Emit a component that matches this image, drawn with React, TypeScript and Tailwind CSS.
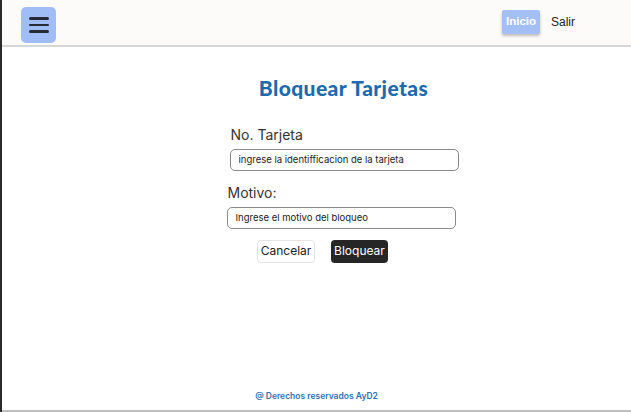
export default function App() {
  return (
    <div
      className="flex h-[412px] w-[631px] flex-col overflow-hidden border-l-2 border-[#2b2b2b] bg-white text-[#2a2a2a]"
      style={{ fontFamily: 'Inter, "Noto Sans", sans-serif' }}
    >
      <header className="flex h-[47px] shrink-0 items-start border-b-2 border-[#d6d6d6] bg-[#fcfbf9] pl-[19px] pr-[56px]">
        <button className="mt-[7px] flex h-[36px] w-[35px] flex-col items-center justify-center gap-[4px] rounded-[5px] bg-[#a0bdf6]">
          <span className="h-[2.5px] w-[20px] rounded bg-[#252a33]" />
          <span className="h-[2.5px] w-[20px] rounded bg-[#252a33]" />
          <span className="h-[2.5px] w-[20px] rounded bg-[#252a33]" />
        </button>

        <nav className="ml-auto mt-[10px] flex items-center gap-[11px]">
          <button
            className="h-[24px] w-[38px] rounded-[2px] bg-[#a3bff6] text-[11.5px] font-bold text-white shadow-[0_2px_3px_rgba(0,0,0,0.25)]"
            style={{ fontFamily: '"Liberation Sans", Arial, sans-serif' }}
          >
            Inicio
          </button>
          <span
            className="text-[12px] text-[#222]"
            style={{ fontFamily: '"Liberation Sans", Arial, sans-serif' }}
          >
            Salir
          </span>
        </nav>
      </header>

      <main className="flex flex-1 flex-col items-center">
        <div className="flex flex-col items-center pl-[54px]">
          <h1
            className="mt-[25px] text-[21px] font-black tracking-[0.4px] text-[#1d6bad]"
            style={{ fontFamily: 'Lato, "Noto Sans", sans-serif' }}
          >
            Bloquear Tarjetas
          </h1>

          <div className="mt-[22px] flex w-[232px] flex-col text-[#333]">
            <label className="ml-[3px] text-[14px] leading-[18px]">No. Tarjeta</label>
            <input
              readOnly
              value="ingrese la identifficacion de la tarjeta"
              className="ml-[2px] mt-[5px] h-[22px] w-[229px] rounded-[5px] border border-[#8a8a8a] px-[8px] text-[9.5px] text-[#222] outline-none"
            />

            <label className="mt-[13px] text-[14px] leading-[18px]">Motivo:</label>
            <input
              readOnly
              value="Ingrese el motivo del bloqueo"
              className="-ml-[1px] mt-[5px] h-[22px] w-[229px] rounded-[5px] border border-[#8a8a8a] px-[8px] text-[9.5px] text-[#222] outline-none"
            />

            <div className="mt-[11px] flex justify-center gap-[16px] pr-[42px]">
              <button className="h-[23px] w-[58px] rounded-[4px] border border-[#e4e4e4] bg-white text-[12px] text-[#222]">
                Cancelar
              </button>
              <button className="h-[23px] w-[57px] rounded-[4px] bg-[#262626] text-[12px] text-white">
                Bloquear
              </button>
            </div>
          </div>
        </div>

        <p className="mt-auto mb-[7px] text-[8.5px] font-semibold text-[#2d70b3]">
          @ Derechos reservados AyD2
        </p>
      </main>

      <div className="h-[2px] shrink-0 bg-[#bdbdbd]" />
    </div>
  )
}
